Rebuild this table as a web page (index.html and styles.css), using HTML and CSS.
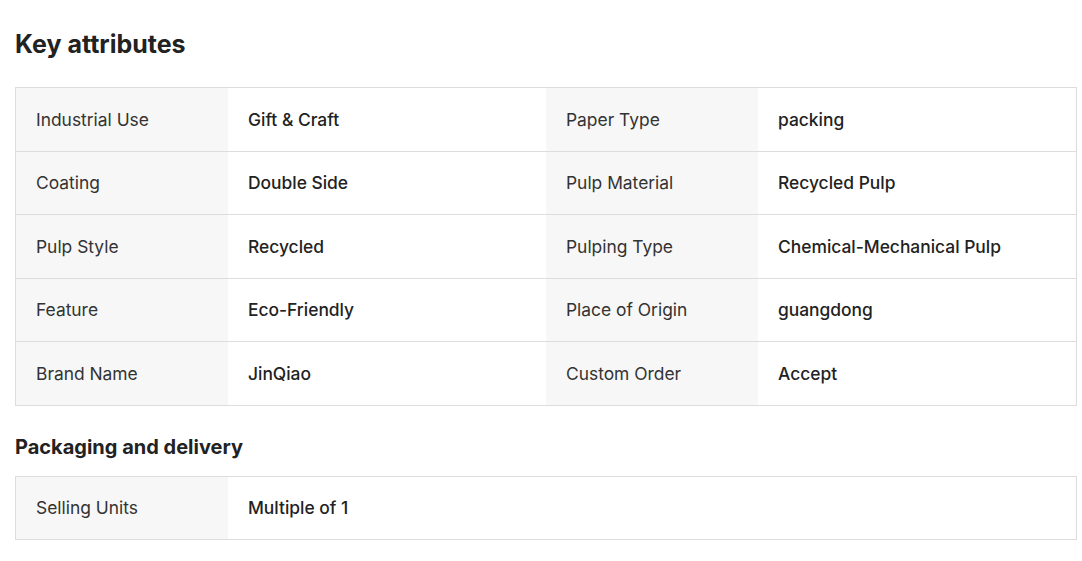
FILE: index.html
```html
<!DOCTYPE html>
<html>
<head>
<meta charset="utf-8">
<link rel="stylesheet" href="styles.css">
</head>
<body>
<div class="page">
  <h2 class="title">Key attributes</h2>
  <div class="grid four">
    <div class="lbl">Industrial Use</div><div class="val">Gift &amp; Craft</div>
    <div class="lbl">Paper Type</div><div class="val">packing</div>
    <div class="lbl">Coating</div><div class="val">Double Side</div>
    <div class="lbl">Pulp Material</div><div class="val">Recycled Pulp</div>
    <div class="lbl">Pulp Style</div><div class="val">Recycled</div>
    <div class="lbl">Pulping Type</div><div class="val">Chemical-Mechanical Pulp</div>
    <div class="lbl">Feature</div><div class="val">Eco-Friendly</div>
    <div class="lbl">Place of Origin</div><div class="val">guangdong</div>
    <div class="lbl last">Brand Name</div><div class="val last">JinQiao</div>
    <div class="lbl last">Custom Order</div><div class="val last">Accept</div>
  </div>
  <h3 class="subtitle">Packaging and delivery</h3>
  <div class="grid two">
    <div class="lbl last">Selling Units</div><div class="val last">Multiple of 1</div>
  </div>
</div>
</body>
</html>
```
FILE: styles.css
```css
* { box-sizing: border-box; }
html, body { margin: 0; padding: 0; background: #fff; }
body { font-family: Inter, "Noto Sans", sans-serif; color: #222; }
.page { padding: 28px 5px 0 15px; }
.title { margin: 0 0 27px; font-size: 25px; line-height: 32px; font-weight: 700; color: #222; }
.subtitle { margin: 27px 0 15px; font-size: 20px; line-height: 28px; font-weight: 700; color: #222; }
.grid { display: grid; border: 1px solid #ddd; }
.four { grid-template-columns: 212px 318px 212px 318px; }
.two { grid-template-columns: 212px 848px; }
.lbl, .val { height: 63.5px; display: flex; align-items: center; padding: 0 20px; font-size: 17.4px; border-bottom: 1px solid #ddd; }
.lbl { background: #f7f7f7; color: #333; font-weight: 400; }
.val { background: #fff; color: #222; font-weight: 500; }
.last { border-bottom: none; height: 62.5px; }
```
